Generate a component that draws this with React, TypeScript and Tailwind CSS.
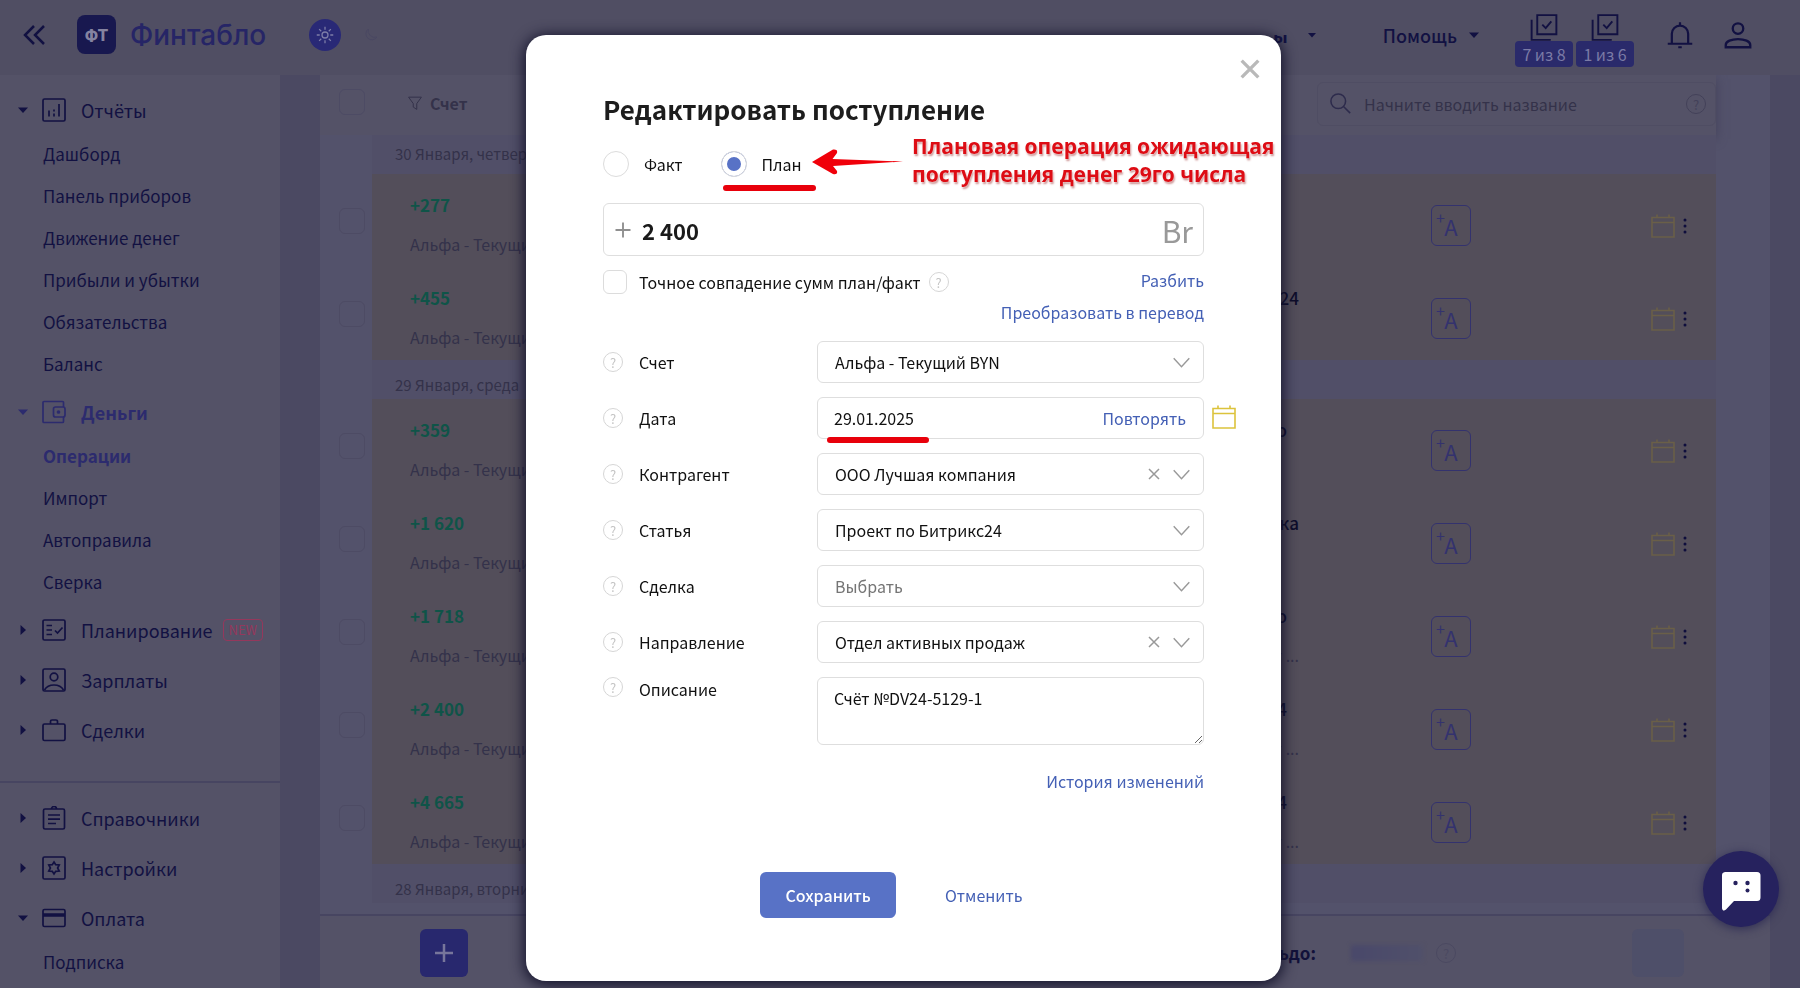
import { Fragment, type JSX, type ReactNode, useState } from 'react'
import { clsx } from 'clsx'
import { twMerge } from 'tailwind-merge'

type IconProps = { className?: string; children: ReactNode }

function Icon({ className, children }: IconProps): JSX.Element {
  return (
    <svg viewBox="0 0 24 24" fill="none" stroke="currentColor" strokeWidth="1.7" className={twMerge('size-6 shrink-0', className)} aria-hidden="true">
      {children}
    </svg>
  )
}

const icons = {
  reports: (
    <>
      <rect x="1" y="1" width="22" height="22" rx="1.5" />
      <path d="M7 12.5v6M12 15.5v3M12 11.5v2M17 6v12.5" />
    </>
  ),
  money: (
    <>
      <path d="M21.5 7V2.5a1 1 0 0 0-1-1H2a1 1 0 0 0-1 1v19a1 1 0 0 0 1 1h18.5a1 1 0 0 0 1-1V17" />
      <rect x="11.5" y="7" width="11.5" height="10" rx="2" />
      <circle cx="16.5" cy="12" r="1" fill="currentColor" />
    </>
  ),
  planning: (
    <>
      <rect x="1" y="2" width="22" height="20" rx="1.5" />
      <path d="M4.5 7.5h5.5M4.5 12h5.5M4.5 16.5h5.5M13 12.5l2.5 2.5 5-5.5" />
    </>
  ),
  salary: (
    <>
      <rect x="1" y="1" width="22" height="22" rx="1.5" />
      <circle cx="12" cy="9" r="3.8" />
      <path d="M2.5 22c2-3.5 5.5-5 9.5-5s7.5 1.5 9.5 5" />
    </>
  ),
  deals: (
    <>
      <rect x="1" y="6" width="22" height="16.5" rx="1.5" />
      <path d="M8.5 6V3.5A1.5 1.5 0 0 1 10 2h4a1.5 1.5 0 0 1 1.500 1.5V6" />
    </>
  ),
  catalogs: (
    <>
      <rect x="1.5" y="3" width="21" height="20" rx="1.5" />
      <path d="M6 9h12M6 13.2h12M6 17.5h8M9.5 3a2.5 2.5 0 0 1 5 0" />
    </>
  ),
  settings: (
    <>
      <rect x="1" y="1" width="22" height="22" rx="1.5" />
      <path d="M12 6l1.7 2.7 3.5.3-1.600 3 1.600 3-3.500.3L12 18l-1.700-2.700-3.500-.3 1.600-3-1.600-3 3.500-.3z" />
    </>
  ),
  payment: (
    <>
      <rect x="1" y="3.5" width="22" height="17" rx="1.5" />
      <path d="M1 9h22" strokeWidth="3.5" />
    </>
  ),
}

type Section = {
  title: string
  icon: keyof typeof icons
  open?: boolean
  active?: boolean
  isNew?: boolean
  items?: string[]
}

const mainSections: Section[] = [
  { title: 'Отчёты', icon: 'reports', open: true, items: ['Дашборд', 'Панель приборов', 'Движение денег', 'Прибыли и убытки', 'Обязательства', 'Баланс'] },
  { title: 'Деньги', icon: 'money', open: true, active: true, items: ['Операции', 'Импорт', 'Автоправила', 'Сверка'] },
  { title: 'Планирование', icon: 'planning', isNew: true },
  { title: 'Зарплаты', icon: 'salary' },
  { title: 'Сделки', icon: 'deals' },
]

const extraSections: Section[] = [
  { title: 'Справочники', icon: 'catalogs' },
  { title: 'Настройки', icon: 'settings' },
  { title: 'Оплата', icon: 'payment', open: true, items: ['Подписка'] },
]

type Operation = { amount: string; category?: string; note?: string; narrow?: boolean }

const groups: { date: string; rows: Operation[] }[] = [
  { date: '30 Января, четверг', rows: [{ amount: '+277' }, { amount: '+455', category: 'Битрикс24' }] },
  {
    date: '29 Января, среда',
    rows: [
      { amount: '+359', category: 'Бюро', narrow: true },
      { amount: '+1 620', category: 'Разработка' },
      { amount: '+1 718', category: 'Бюро', narrow: true, note: 'Счёт ...' },
      { amount: '+2 400', category: 'Битрикс24', narrow: true, note: 'Счёт ...' },
      { amount: '+4 665', category: 'Битрикс24', narrow: true, note: 'Счёт ...' },
    ],
  },
  { date: '28 Января, вторник', rows: [] },
]

function Triangle({ down, className }: { down?: boolean; className?: string }): JSX.Element {
  return (
    <svg viewBox="0 0 10 10" fill="currentColor" className={twMerge('size-[10px] shrink-0', className)} aria-hidden="true">
      <path d={down ? 'M0 2.5h10L5 8z' : 'M2.5 0v10L8 5z'} />
    </svg>
  )
}

function Help({ className }: { className?: string }): JSX.Element {
  return (
    <button
      type="button"
      aria-label="Подсказка"
      className={twMerge('flex size-5 shrink-0 items-center justify-center rounded-full border border-[#d6d6d6] text-[13px] leading-none text-[#c4c4c4]', className)}
    >
      ?
    </button>
  )
}

function Calendar({ className }: { className?: string }): JSX.Element {
  return (
    <svg viewBox="0 0 24 24" fill="none" stroke="currentColor" strokeWidth="1.6" className={clsx('size-6 shrink-0', className)} aria-hidden="true">
      <path d="M1 3.5h22V23H1zM1 8.5h22M6 .5v3M18 .5v3" />
    </svg>
  )
}

function SidebarSection({ section }: { section: Section }): JSX.Element {
  return (
    <li>
      <a href="#" className={clsx('mt-1 flex h-[46px] items-center pl-[18px] text-lg', section.active ? 'font-bold text-[#2c2b6e]' : 'text-[#121142]')}>
        <Triangle down={section.open} />
        <Icon className="ml-[14px]">{icons[section.icon]}</Icon>
        <span className="ml-[15px]">{section.title}</span>
        {section.isNew && <span className="ml-[10px] rounded-sm border border-[#94385c] px-[5px] text-[13px] leading-5 text-[#94385c]">NEW</span>}
      </a>
      {section.items && (
        <ul>
          {section.items.map((item) => (
            <li key={item}>
              <a href="#" className={clsx('flex h-[42px] items-center pl-[43px] text-[17px]', item === 'Операции' ? 'font-bold text-[#2c2b6e]' : 'text-[#121142]')}>
                {item}
              </a>
            </li>
          ))}
        </ul>
      )}
    </li>
  )
}

function Sidebar(): JSX.Element {
  return (
    <nav className="w-[280px] shrink-0 overflow-hidden bg-[#545267] pt-2">
      <ul>
        {mainSections.map((s) => (
          <SidebarSection key={s.title} section={s} />
        ))}
      </ul>
      <ul className="mt-7 border-t-2 border-[#474561] pt-2">
        {extraSections.map((s) => (
          <SidebarSection key={s.title} section={s} />
        ))}
      </ul>
    </nav>
  )
}

function TaskCounter({ label }: { label: string }): JSX.Element {
  return (
    <button type="button" className="flex w-[58px] flex-col items-center">
      <Icon className="h-[27px] w-7 text-[#121142]">
        <path d="M6 1h17v17H6zM1 5v18h17M10.5 9.5l3 3 5-6" />
      </Icon>
      <span className="w-full rounded-sm bg-[#2a2a6b] text-base leading-[26px] text-[#7b7ba6]">{label}</span>
    </button>
  )
}

function Header(): JSX.Element {
  return (
    <header className="relative flex h-[75px] shrink-0 items-center bg-[#504e63] pb-[6px] text-[#121142]">
      <button type="button" aria-label="Свернуть меню" className="ml-[23px]">
        <Icon>
          <path d="M11 3l-9 9 9 9M21 3l-9 9 9 9" strokeWidth="2.5" />
        </Icon>
      </button>
      <a href="#" className="ml-[30px] flex items-center gap-[14px]">
        <span className="flex h-[39px] w-[39px] items-center justify-center rounded-lg bg-[#18184f] font-['Inter'] text-base font-extrabold text-[#8583a0]">ФТ</span>
        <span className="font-['Inter'] text-[28px] font-medium text-[#262566]">Финтабло</span>
      </a>
      <button type="button" aria-label="Светлая тема" className="ml-[43px] flex size-8 items-center justify-center rounded-full bg-[#292976] text-[#7d7da8]">
        <Icon className="size-[18px]">
          <circle cx="12" cy="12" r="4" />
          <path d="M12 1v4M12 19v4M1 12h4M19 12h4M4.2 4.2L7 7M17 17l2.8 2.8M4.2 19.8L7 17M17 7l2.8-2.8" />
        </Icon>
      </button>
      <button type="button" aria-label="Тёмная тема" className="ml-[22px] text-[#494762]">
        <Icon className="size-4">
          <path d="M8 3a9 9 0 1 0 13 12A10 10 0 0 1 8 3z" strokeWidth="1.4" />
        </Icon>
      </button>
      <button type="button" className="ml-auto flex items-center gap-5 text-lg font-bold">
        ы
        <Triangle down className="size-2" />
      </button>
      <span className="absolute top-0 right-[510px] left-[923px] h-[35px] bg-[#504e63]" />
      <button type="button" className="ml-[67px] flex items-center gap-3 text-lg font-medium">
        Помощь
        <Triangle down />
      </button>
      <div className="ml-9 flex gap-[3px] pt-3">
        <TaskCounter label="7 из 8" />
        <TaskCounter label="1 из 6" />
      </div>
      <button type="button" aria-label="Уведомления" className="ml-8">
        <Icon className="size-7">
          <path d="M5 19v-8a7 7 0 0 1 14 0v8M1.5 19.5h21M12 1v3M10.5 22.5h3" strokeWidth="1.9" />
        </Icon>
      </button>
      <button type="button" aria-label="Профиль" className="mr-[48px] ml-[30px]">
        <Icon className="size-7">
          <circle cx="12" cy="6.5" r="4.5" strokeWidth="2" />
          <path d="M1.5 22.5v-2c0-3 5-5 10.5-5s10.5 2 10.5 5v2z" strokeWidth="2" />
        </Icon>
      </button>
    </header>
  )
}

function TableCheckbox({ label }: { label: string }): JSX.Element {
  return <input type="checkbox" aria-label={label} className="block size-[26px] appearance-none rounded-md border border-[#4d4b64]" />
}

function OperationRow({ op }: { op: Operation }): JSX.Element {
  return (
    <tr className="h-[93px]">
      <td className="bg-[#53526b] pl-[19px]">
        <TableCheckbox label={`Выбрать ${op.amount}`} />
      </td>
      <td className="pl-[38px] align-top whitespace-nowrap">
        <p className="mt-[18px] text-[17px] leading-[26px] font-bold text-[#0f5448]">{op.amount}</p>
        <p className="mt-[13px] text-base leading-[26px] text-[#34324a]">Альфа - Текущий BYN</p>
      </td>
      <td className="pr-px text-right align-top">
        <p className={clsx('mt-[18px] h-[26px] text-[17px] leading-[26px] font-medium text-[#0e0d2a]', op.narrow && 'pr-[12px]')}>{op.category}</p>
        <p className="mt-[13px] text-base leading-[26px] text-[#34324a]">{op.note}</p>
      </td>
      <td className="pt-[10px] pl-[131px]">
        <button type="button" aria-label="Автоправило" className="relative flex h-[41px] w-10 items-center justify-center rounded-md border border-[#33326e] text-[22px] leading-none text-[#33326e]">
          <span className="absolute top-[3px] left-1 text-base leading-4">+</span>A
        </button>
      </td>
      <td className="pt-[10px]">
        <div className="flex items-center justify-end gap-2 pr-[29px]">
          <Calendar className="text-[#6a5f48]" />
          <button type="button" aria-label="Действия" className="text-[#0e0d3c]">
            <svg viewBox="0 0 4 16" fill="currentColor" className="h-4 w-1">
              <circle cx="2" cy="2" r="1.5" />
              <circle cx="2" cy="8" r="1.5" />
              <circle cx="2" cy="14" r="1.5" />
            </svg>
          </button>
        </div>
      </td>
    </tr>
  )
}

function OperationsTable(): JSX.Element {
  return (
    <div className="min-h-0 flex-1 overflow-hidden pr-[54px]">
      <table className="w-full table-fixed border-collapse text-left">
        <colgroup>
          <col className="w-[52px]" />
          <col />
          <col className="w-[300px]" />
          <col className="w-[316px]" />
          <col className="w-[100px]" />
        </colgroup>
        <thead className="bg-[#545267] shadow-[0_4px_10px_#43415a]">
          <tr className="h-[60px]">
            <th className="pb-[6px] pl-[19px]">
              <TableCheckbox label="Выбрать все" />
            </th>
            <th className="pb-1 pl-9 text-base font-bold text-[#34324a]">
              <span className="flex items-center gap-2">
                <Icon className="h-4 w-[14px]">
                  <path d="M1 2h22l-8 11v10l-6-4v-6z" />
                </Icon>
                Счет
              </span>
            </th>
            <th />
            <th colSpan={2} className="pb-[2px] pl-[17px] font-normal">
              <label className="flex h-11 items-center rounded-md border border-[#4f4d63] pr-[9px] pl-3 text-[#34324a]">
                <Icon className="size-[22px] text-[#2d2b4c]">
                  <circle cx="9" cy="9" r="8" />
                  <path d="M15 15l7 7" />
                </Icon>
                <input type="search" aria-label="Поиск" placeholder="Начните вводить название" className="ml-3 min-w-0 flex-1 bg-transparent text-base placeholder:text-[#34324a]" />
                <Help className="border-[#434159] text-[#434159]" />
              </label>
            </th>
          </tr>
        </thead>
        <tbody className="bg-[#534e5a]">
          {groups.map((g, i) => (
            <Fragment key={g.date}>
              <tr className="h-[39px] bg-[#514f68]">
                <td className="bg-[#53526b]" />
                <th colSpan={4} className={clsx('pl-[23px] text-[15px] font-normal whitespace-nowrap text-[#34324a]', i > 0 && 'pt-3')}>
                  {g.date}
                </th>
              </tr>
              {g.rows.map((op) => (
                <OperationRow key={op.amount} op={op} />
              ))}
            </Fragment>
          ))}
        </tbody>
      </table>
    </div>
  )
}

function Footer(): JSX.Element {
  return (
    <footer className="flex h-[74px] shrink-0 items-center border-t-2 border-[#474561] bg-[#545267] pt-[2px] pr-[86px] pl-[100px]">
      <button type="button" aria-label="Добавить" className="flex size-12 items-center justify-center rounded-md bg-[#28286e] text-[#77769b]">
        <Icon>
          <path d="M12 3v18M3 12h18" strokeWidth="2.5" />
        </Icon>
      </button>
      <span className="ml-auto text-[17px] font-bold text-[#12113a]">Сальдо:</span>
      <span className="ml-[35px] h-4 w-[72px] bg-linear-to-r from-[#49486a] to-[#50506a] blur-[2px]" />
      <Help className="ml-[13px] border-[#4b4961] text-[#4b4961]" />
      <span className="ml-[176px] h-12 w-[52px] rounded-md bg-[#4e4f69]" />
    </footer>
  )
}

const inputBox = 'h-[42px] w-full rounded-md border border-[#dedede] bg-white'

type FieldProps = { id: string; label: string; children: ReactNode; top?: boolean }

function Field({ id, label, children, top }: FieldProps): JSX.Element {
  return (
    <div className={clsx('flex', top ? 'items-start' : 'items-center')}>
      <Help />
      <label htmlFor={id} className="ml-4 w-[178px] shrink-0">
        {label}
      </label>
      <div className="relative min-w-0 flex-1">{children}</div>
    </div>
  )
}

type SelectFieldProps = { id: string; label: string; value: string; muted?: boolean; clearable?: boolean }

function SelectField({ id, label, value, muted, clearable }: SelectFieldProps): JSX.Element {
  return (
    <Field id={id} label={label}>
      <select id={id} className={clsx(inputBox, 'appearance-none pr-16 pl-[17px]', muted && 'text-[#757575]')}>
        <option>{value}</option>
      </select>
      <span className="pointer-events-none absolute inset-y-0 right-[14px] flex items-center gap-[13px] text-[#999]">
        {clearable && (
          <button type="button" aria-label="Очистить" className="pointer-events-auto">
            <Icon className="size-3">
              <path d="M2 2l20 20M22 2L2 22" strokeWidth="3" />
            </Icon>
          </button>
        )}
        <Icon className="size-[17px]">
          <path d="M1 6l11 12L23 6" strokeWidth="2" />
        </Icon>
      </span>
    </Field>
  )
}

function OperationDialog(): JSX.Element {
  const [kind, setKind] = useState('plan')
  const [date, setDate] = useState('29.01.2025')
  const [note, setNote] = useState('Счёт №DV24-5129-1')

  return (
    <div role="dialog" aria-modal="true" aria-labelledby="dialog-title" className="fixed inset-0 flex items-center justify-center pt-7 pl-[7px]">
      <form className="relative w-[755px] rounded-[20px] bg-white px-[77px] pt-[54px] pb-[63px] text-base leading-6 text-[#111] shadow-[0_2px_14px_2px_#14132c]">
        <button type="button" aria-label="Закрыть" className="absolute top-6 right-[21px] text-[#b9b9b9]">
          <Icon className="size-5">
            <path d="M2 2l20 20M22 2L2 22" strokeWidth="4" />
          </Icon>
        </button>

        <h1 id="dialog-title" className="text-[26px] leading-10 font-bold text-[#1d1d1d]">
          Редактировать поступление
        </h1>

        <div className="mt-[21px] flex h-7 items-center">
          {[
            { value: 'fact', label: 'Факт' },
            { value: 'plan', label: 'План' },
          ].map((o) => (
            <label key={o.value} className="relative mr-[38px] flex items-center gap-[15px]">
              <input
                type="radio"
                name="kind"
                checked={kind === o.value}
                onChange={() => setKind(o.value)}
                className="size-[26px] appearance-none rounded-full border border-[#dcdcdc] bg-white checked:bg-[#5872c6] checked:shadow-[inset_0_0_0_5px_white]"
              />
              {o.label}
              {o.value === 'plan' && <span className="absolute top-[34px] left-[2px] h-[6px] w-[93px] rounded-full bg-[#e8000b]" />}
            </label>
          ))}
        </div>

        {/* Пометка поверх формы */}
        <svg viewBox="0 0 94 28" className="absolute top-[113px] left-[285px] h-7 w-[94px]" fill="#f0000a" aria-hidden="true">
          <path d="M1 14L22 1.500Q27 1 26 5L21.500 11 92 13.500 22 18 26 23Q27 27 22 26z" />
        </svg>
        <p className="absolute top-[97px] left-[386px] font-['Open_Sans'] text-[21px] leading-7 font-bold whitespace-nowrap text-[#dd0c14] [text-shadow:0_0_2px_white,1px_2px_2px_#c98b8b]">
          Плановая операция ожидающая
          <br />
          поступления денег 29го числа
        </p>

        <div className="mt-[25px] flex h-[53px] items-center rounded-md border border-[#dedede] px-[10px]">
          <Icon className="size-[18px] text-[#8f8f8f]">
            <path d="M12 2v20M2 12h20" strokeWidth="2.5" />
          </Icon>
          <input aria-label="Сумма" defaultValue="2 400" className="ml-[10px] min-w-0 flex-1 text-[22px] font-bold text-[#1a1a1a]" />
          <span className="text-3xl text-[#999]">Br</span>
        </div>

        <div className="mt-3 flex items-start">
          <label className="mt-[2px] flex items-center gap-3">
            <input type="checkbox" className="size-6 appearance-none rounded-md border border-[#dcdcdc]" />
            Точное совпадение сумм план/факт
          </label>
          <div className="mt-1 ml-2">
            <Help />
          </div>
          <a href="#" className="ml-auto text-[#4460b5]">
            Разбить
          </a>
        </div>
        <div className="mt-[6px] text-right text-[#4460b5]">
          <a href="#">Преобразовать в перевод</a>
        </div>

        <div className="mt-[17px] flex flex-col gap-[14px]">
          <SelectField id="account" label="Счет" value="Альфа - Текущий BYN" />
          <Field id="date" label="Дата">
            <input id="date" value={date} onChange={(e) => setDate(e.target.value)} className={clsx(inputBox, 'pr-28 pl-4')} />
            <a href="#" className="absolute top-[9px] right-[18px] text-[#4460b5]">
              Повторять
            </a>
            <Calendar className="absolute top-2 -right-8 text-[#dcc33c]" />
            <span className="absolute top-10 left-[10px] h-[6px] w-[102px] rounded-full bg-[#e8000b]" />
          </Field>
          <SelectField id="partner" label="Контрагент" value="ООО Лучшая компания" clearable />
          <SelectField id="article" label="Статья" value="Проект по Битрикс24" />
          <SelectField id="deal" label="Сделка" value="Выбрать" muted />
          <SelectField id="direction" label="Направление" value="Отдел активных продаж" clearable />
          <Field id="note" label="Описание" top>
            <textarea id="note" value={note} onChange={(e) => setNote(e.target.value)} className="block h-[68px] w-full resize-y rounded-md border border-[#dedede] px-4 py-2" />
          </Field>
        </div>

        <div className="mt-6 text-right text-[#4460b5]">
          <a href="#">История изменений</a>
        </div>

        <div className="mt-[79px] flex items-center gap-[49px] pl-[157px]">
          <button type="submit" className="h-[46px] w-[136px] rounded-md bg-[#5872c6] font-medium text-white">
            Сохранить
          </button>
          <button type="button" className="text-[#4460b5]">
            Отменить
          </button>
        </div>
      </form>
    </div>
  )
}

export default function App(): JSX.Element {
  return (
    <div className="flex h-screen flex-col overflow-hidden bg-[#4b4962] font-['Noto_Sans_CJK_SC',sans-serif]">
      <Header />
      <div className="flex min-h-0 flex-1">
        <Sidebar />
        <main className="mr-[30px] ml-10 flex min-w-0 flex-1 flex-col bg-[#53526b]">
          <OperationsTable />
          <Footer />
        </main>
      </div>
      <OperationDialog />
      <button type="button" aria-label="Чат" className="fixed right-[21px] bottom-[61px] flex size-[76px] items-center justify-center rounded-full bg-[#26225e] shadow-[0_2px_10px_#302e55]">
        <svg viewBox="0 0 40 40" className="mt-1 size-10" aria-hidden="true">
          <path d="M4 1h32a3.5 3.5 0 0 1 3.5 3.5v22A3.5 3.5 0 0 1 36 30H13l-8 8.5c-2 2-4 1-4-1.500V4.500A3.500 3.500 0 0 1 4 1z" fill="#fff" />
          <circle cx="14.5" cy="12" r="2.2" fill="#26225e" />
          <circle cx="26.5" cy="12" r="2.2" fill="#26225e" />
          <circle cx="26.5" cy="19.5" r="2" fill="#26225e" />
        </svg>
      </button>
    </div>
  )
}
